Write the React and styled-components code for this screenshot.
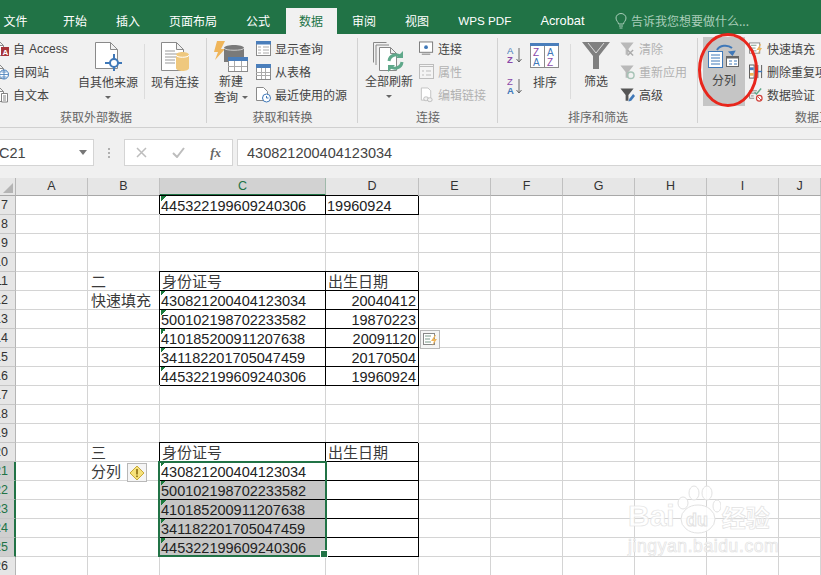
import React from 'react';
import styled, { createGlobalStyle, css } from 'styled-components';

const Global = createGlobalStyle`
  html, body { margin: 0; padding: 0; background: #fff; overflow: hidden; }
  #root { width: 821px; height: 575px; overflow: hidden; }
  * { box-sizing: border-box; }
`;
const CJK = `"Noto Sans CJK SC", "Liberation Sans", sans-serif`;
const NUM = `"Liberation Sans", "Noto Sans CJK SC", sans-serif`;

const Page = styled.div`
  position: relative; width: 821px; height: 575px; overflow: hidden;
  display: flex; flex-direction: column; font-family: ${CJK};
`;
const TabBar = styled.nav`
  flex: none; height: 34px; background: #217346; display: flex; align-items: flex-end;
  padding-left: 0; gap: 2px; margin-left: -10px; font-size: 12px; color: #fff;
`;
const Tab = styled.div`
  height: 26px; line-height: 25px; padding: 0 13.5px; white-space: nowrap;
  margin-right: ${p => p.$mr || 0}px;
  ${p => p.$fs && css`font-family: ${NUM}; font-size: ${p.$fs}px;`}
  ${p => p.$active && css`background: #f1f1f1; color: #217346;`}
`;
const TellMe = styled.div`
  height: 26px; margin-left: 15px; display: flex; align-items: center; gap: 4px;
  color: #a9cdb9; white-space: nowrap; padding-bottom: 1px;
`;
const Ribbon = styled.div`
  flex: none; height: 94px; background: #f1f1f1; border-bottom: 1px solid #d0d0d0;
  display: flex; overflow: hidden; color: #444; font-size: 12px;
`;
const RibbonTrack = styled.div`display: flex; margin-left: -15px; height: 93px; flex: none;`;
const Group = styled.section`
  position: relative; width: ${p => p.$w}px; flex: none; display: flex; flex-direction: column;
  padding-top: 3px;
  ${p => p.$sep && css`
    &::after { content: ''; position: absolute; right: 0; top: 4px; bottom: 4px; width: 1px; background: #d2d2d2; }
  `}
`;
const GroupBody = styled.div`
  display: flex; height: 69px; padding-left: ${p => p.$pl || 0}px;
`;
const GroupLabel = styled.div`
  height: 21px; line-height: 21px; text-align: center; color: #666; font-size: 12px; white-space: nowrap;
`;
const Big = styled.div`
  width: ${p => p.$w}px; margin-left: ${p => p.$ml || 0}px; flex: none; height: 69px;
  display: flex; flex-direction: column; align-items: center; padding-top: ${p => p.$pt ?? 5}px;
  line-height: 16px; text-align: center; white-space: nowrap; color: #444;
  ${p => p.$on && css`background: #c5c5c5;`}
`;
const BigIcon = styled.div`height: ${p => p.$h || 30}px; margin-bottom: ${p => p.$mb ?? 2}px; display: flex; align-items: flex-start; justify-content: center;`;
const Caret = styled.span`
  display: inline-block; width: 0; height: 0; border: 3px solid transparent; border-top: 3px solid #666; border-bottom: 0;
  margin: ${p => p.$inline ? '0 0 2px 4px' : '6px 0 0'};
  vertical-align: middle;
`;
const Small = styled.div`
  width: ${p => p.$w}px; margin-left: ${p => p.$ml || 0}px; flex: none; display: flex; flex-direction: column;
`;
const SortCol = styled.div`
  width: 15px; flex: none; display: flex; flex-direction: column; padding-top: 9px; gap: 13px;
`;
const SmallRow = styled.div`
  height: 23px; display: flex; align-items: center; gap: ${p => p.$gap ?? 4}px; white-space: nowrap;
  color: ${p => p.$off ? '#b1b1b1' : '#444'};
`;
const Latin = styled.span`font-family: ${NUM}; font-size: 12px; margin-left: 1px;`;
const IconBox = styled.span`
  width: ${p => p.$w || 15}px; height: 16px; flex: none; display: flex; align-items: center; justify-content: center;
`;
const Divider = styled.div`width: 1px; height: 55px; margin: 7px 0 0 ${p => p.$ml || 0}px; background: #dcdcdc; flex: none;`;

const FormulaBar = styled.div`
  flex: none; height: 50px; background: #f0f0f0; padding: 11px 0 12px; display: flex; align-items: stretch;
  font-family: ${NUM}; font-size: 14.5px; color: #444;
`;
const NameBox = styled.div`
  width: 94px; background: #fff; border: 1px solid #d4d4d4; border-left: 0; display: flex; align-items: center;
  justify-content: space-between; padding: 0 5px 0 0; margin-left: 0; overflow: hidden;
  span:first-child { margin-left: -1px; }
`;
const NameCaret = styled.span`width: 0; height: 0; border: 4px solid transparent; border-top: 5px solid #777; border-bottom: 0; margin-right: 1px;`;
const Grip = styled.div`width: 30px; display: flex; flex-direction: column; align-items: center; justify-content: center; gap: 2px; i { width: 2px; height: 2px; background: #b0b0b0; }`;
const FxBox = styled.div`
  width: 109px; background: #fff; border: 1px solid #d4d4d4; display: flex; align-items: center; justify-content: space-between; padding: 0 11px 0 11px;
`;
const Fx = styled.span`font-family: "Liberation Serif", serif; font-style: italic; font-weight: bold; font-size: 13px; color: #666;`;
const FormulaInput = styled.div`
  flex: 1; margin-left: 4px; background: #fff; border: 1px solid #d4d4d4; border-right: 0; display: flex; align-items: center; padding-left: 9px;
`;

const gridTemplate = css`
  display: grid;
  grid-template-columns: 16px 72px 72px 166px 93px 72px 72px 72px 72px 72px 42px;
  grid-template-rows: 18px repeat(20, 19px);
  grid-area: 1 / 1;
`;
const Sheet = styled.div`
  flex: 1; display: grid; overflow: hidden; background: #fff;
  font-family: ${NUM}; font-size: 14.5px; color: #222;
`;
const CellGrid = styled.div`${gridTemplate}`;
const OverlayGrid = styled.div`${gridTemplate} pointer-events: none; z-index: 2;`;
const Corner = styled.div`
  background: #e6e6e6; border-right: 1px solid #b5b5b5; border-bottom: 1px solid #a8a8a8; position: relative; overflow: hidden;
  &::after { content: ''; position: absolute; right: 2px; bottom: 2px; border: 5px solid #b4b4b4; border-top-color: transparent; border-left-color: transparent; }
`;
const ColHead = styled.div`
  background: ${p => p.$sel ? '#d2d2d2' : '#e6e6e6'}; color: ${p => p.$sel ? '#217346' : '#333'};
  border-right: 1px solid ${p => p.$sel ? '#9fb9aa' : '#c0c0c0'};
  border-bottom: ${p => p.$sel ? '2px solid #217346' : '1px solid #a8a8a8'};
  text-align: center; font-size: 12.5px; line-height: 17px;
`;
const RowHead = styled.div`
  background: ${p => p.$sel ? '#cfcfcf' : '#e6e6e6'}; color: ${p => p.$sel ? '#217346' : '#333'};
  border-bottom: 1px solid #c6c6c6;
  border-right: ${p => p.$sel ? '2px solid #217346' : '1px solid #b5b5b5'};
  font-size: 12.5px; line-height: 18px; overflow: hidden; display: flex; justify-content: flex-end; padding-right: ${p => p.$sel ? 6 : 7}px; white-space: nowrap;
`;
const Cell = styled.div`
  border-right: 1px solid ${p => p.$box ? '#000' : '#d4d4d4'};
  border-bottom: 1px solid ${p => p.$box ? '#000' : '#d4d4d4'};
  background-color: ${p => p.$gray ? '#c6c6c6' : '#fff'};
  white-space: nowrap; line-height: 19px; padding: 1px 2px 0 1px;
  text-align: ${p => p.$right ? 'right' : 'left'};
  min-width: 0; overflow: visible;
  ${p => p.$box && css`box-shadow: -1px -1px 0 0 #000;`}
  ${p => p.$tri && css`
    background-image: linear-gradient(135deg, #1a7a3c 50%, transparent 50%);
    background-repeat: no-repeat; background-size: 5px 5px; background-position: 1px 0;
  `}
  ${p => p.$cjk && css`font-family: ${CJK}; font-size: 15px; line-height: 18px; color: #3a3a3a; padding-top: 0; padding-left: ${p.$pl ?? 2}px;`}
`;
const Selection = styled.div`
  grid-column: 4; grid-row: 16 / span 5; margin: -1px -1px 0 -2px; border: 2px solid #217346;
  position: relative;
  &::after { content: ''; position: absolute; right: -3px; bottom: -3px; width: 6px; height: 6px; background: #217346; border: 1px solid #fff; }
`;
const SmartTag = styled.div`
  grid-column: ${p => p.$col}; grid-row: ${p => p.$row}; width: 20px; height: 19px;
  margin: ${p => p.$m}; background: #f5f5f5; border: 1px solid #b8b8b8; display: flex; align-items: center; justify-content: center;
`;
const Circle = styled.svg`position: absolute; left: 695px; top: 30px; width: 66px; height: 84px; pointer-events: none;`;
const Watermark = styled.div`
  position: absolute; left: 628px; top: 484px; width: 150px; height: 72px; pointer-events: none;
  display: flex; flex-direction: column; font-family: ${NUM}; color: rgba(255,255,255,.85);
  -webkit-text-stroke: .7px #e2e2e2;
`;
const MarkTop = styled.div`display: flex; align-items: flex-end; height: 50px; font-size: 30px; font-weight: bold; line-height: 34px;`;
const MarkCn = styled.span`font-family: ${CJK}; font-size: 24px; line-height: 32px; margin-left: 1px; font-weight: 700;`;
const MarkUrl = styled.div`font-size: 17.5px; line-height: 20px; letter-spacing: .6px; margin-top: 3px; white-space: nowrap;`;

/* icons */
const G = '#8a8a8a';
const Doc = ({ x = .5, y = .5, w = 10, h = 13, c = G }) => (
  <path d={`M${x} ${y}h${w - 4}l4 4v${h - 4}h-${w}z M${x + w - 4} ${y}v4h4`} fill="#fff" stroke={c} />
);
const S = ({ w = 15, h = 16, children }) => <svg width={w} height={h} viewBox={`0 0 ${w} ${h}`} fill="none">{children}</svg>;
const AccessI = () => <S w={13}><Doc x={-3.5} y={.5} w={10} h={14} /><rect x="4" y="6" width="8" height="9" fill="#a8353a" /><text x="5.4" y="14" fontSize="8" fontWeight="bold" fill="#fff" fontFamily="Liberation Sans">A</text></S>;
const WebI = () => <S w={13}><Doc x={-3.5} y={.5} w={10} h={14} /><circle cx="7" cy="10.5" r="4.5" fill="#fff" stroke="#3f78b8" /><path d="M2.5 10.5h9M7 6v9M4.5 8h5M4.5 13h5" stroke="#3f78b8" strokeWidth=".8" /></S>;
const TextI = () => <S w={13}><Doc x={-3.5} y={.5} w={10} h={14} /><path d="M4.5 6.500h6v8.500h-6zM6 9h3M6 11h3M6 13h3" stroke="#777" fill="#fff" strokeWidth=".9" /></S>;
const OtherI = () => <svg width="28" height="30" fill="none"><path d="M1.500.5h15l7 7v19h-22z M16.500.5v7h7" fill="#fff" stroke="#8a8a8a" /><circle cx="20" cy="21" r="4" stroke="#3f78b8" strokeWidth="2" fill="#fff" /><path d="M20 12v5M20 25v4M11 21h5M24 21h4" stroke="#3f78b8" strokeWidth="2" /></svg>;
const ExistI = () => <svg width="28" height="30" fill="none"><path d="M.5.5h15l7 7v21h-22zM15.500.5v7h7" fill="#fff" stroke="#8a8a8a" /><path d="M4 9h10M4 12h14M4 15h14M4 18h10M4 21h10" stroke="#999" /><path d="M15 13c0-4 13-4 13 0v13c0 4-13 4-13 0z" fill="#efc87e" /><path d="M15 13c0 3 13 3 13 0" stroke="#fff" /></svg>;
const GridT = ({ x, y, w, h, c = '#4a7ebb', cols = 3, rows = 3 }) => {
  const cx = []; for (let i = 1; i < cols; i++) cx.push(x + (w * i) / cols);
  const cy = []; for (let i = 1; i < rows; i++) cy.push(y + 4 + ((h - 4) * i) / rows);
  return <g><rect x={x + .5} y={y + .5} width={w} height={h} fill="#fff" stroke={G} /><rect x={x} y={y} width={w + 1} height="4" fill={c} />
    {cx.map(v => <path key={v} d={`M${Math.round(v) + .5} ${y + 4}v${h - 4}`} stroke="#aaa" />)}
    {cy.map(v => <path key={v} d={`M${x} ${Math.round(v) + .5}h${w}`} stroke="#aaa" />)}</g>;
};
const NewQ = () => <svg width="34" height="32" fill="none"><path d="M3 1h8l-4 8h4L1 20l3-8H0z" fill="#efb55a" /><path d="M10 8c0-4 20-4 20 0v14H10z" fill="#7a7a7a" /><path d="M10 8c0 3 20 3 20 0" stroke="#ccc" /><GridT x={14} y={17} w={19} h={14} rows={2} /></svg>;
const ShowQ = () => <S h={16}><rect x=".5" y=".5" width="14" height="14" fill="#fff" stroke={G} /><rect x="0" y="0" width="15" height="3.500" fill="#4a7ebb" /><path d="M2 6h3M2 9h3M2 12h3M7 6h6M7 9h6M7 12h6" stroke="#aaa" /></S>;
const FromT = () => <S><GridT x={0} y={0} w={14} h={15} /></S>;
const Recent = () => <S><path d="M.5.5h7l4 4v9h-11z" fill="#fff" stroke={G} /><circle cx="10.500" cy="11" r="4" fill="#fff" stroke="#3f78b8" /><path d="M10.500 9v2h2" stroke="#3f78b8" /></S>;
const RefreshAll = () => <svg width="32" height="30" fill="none"><path d="M.5.5h13M.5.5v20M3 3h13M3 3v20" stroke="#888" /><path d="M6.500 5.500h11l6 6v17h-17zM17.500 5.500v6h6" fill="#fff" stroke="#888" /><path d="M16 19a7 7 0 0 1 12-4M29 20a7 7 0 0 1-12 4" stroke="#5fa88a" strokeWidth="3" /><path d="M30 9v7h-7zM15 30v-7h7z" fill="#5fa88a" /></svg>;
const Conn = () => <S w={16}><rect x=".5" y=".5" width="14" height="11" fill="#fff" stroke="#777" /><path d="M3 13.500h9" stroke="#777" /><circle cx="7.500" cy="6" r="2" fill="#3f78b8" /></S>;
const Prop = () => <S><rect x=".5" y=".5" width="14" height="14" fill="#f4f4f4" stroke="#bdbdbd" /><path d="M0 2.500h15M3 7h2M7 7h5M3 11h2M7 11h5" stroke="#bdbdbd" /></S>;
const EditL = () => <S w={16}><path d="M2.500.5h7l3 3v10h-10z" fill="#fff" stroke="#c0c0c0" /><rect x="5" y="10" width="5" height="4" rx="2" stroke="#bbb" fill="#f1f1f1" /><rect x="9" y="11" width="5" height="4" rx="2" stroke="#bbb" fill="#f1f1f1" /></S>;
const SortI = ({ top, bot, tc, bc }) => <svg width="16" height="18" fill="none"><text x="0" y="8" fontSize="9.500" fill={tc} fontFamily="Liberation Sans">{top}</text><text x="0" y="17" fontSize="9.500" fontWeight="bold" fill={bc} fontFamily="Liberation Sans">{bot}</text><path d="M12 2v14M9.500 13l2.500 3 2.500-3" stroke="#666" /></svg>;
const SortBig = () => <svg width="30" height="26" fill="none"><rect x=".5" y=".5" width="28" height="24" fill="#fff" stroke={G} /><rect width="29" height="3" fill="#4a7ebb" /><path d="M14.500 3v22" stroke={G} /><text x="3" y="13" fontSize="10" fill="#8a49a8" fontFamily="Liberation Sans">Z</text><text x="3" y="23" fontSize="10" fill="#3f78b8" fontFamily="Liberation Sans">A</text><text x="17" y="13" fontSize="10" fill="#3f78b8" fontFamily="Liberation Sans">A</text><text x="17" y="23" fontSize="10" fill="#8a49a8" fontFamily="Liberation Sans">Z</text></svg>;
const Funnel = () => <svg width="28" height="28"><path d="M0 0h28L17 14v13h-6V14z" fill="#808080" /><path d="M6 1l8 10 8-10" stroke="#ddd" fill="none" /></svg>;
const SF = ({ c, children }) => <S w={16}><path d="M.5 1h14L9 8v6H6V8z" fill={c} />{children}</S>;
const ClearI = () => <SF c="#b9b9b9"><path d="M8 9l6 6M14 9l-6 6" stroke="#aaa" strokeWidth="1.500" /></SF>;
const ReapI = () => <SF c="#b9b9b9"><circle cx="11.500" cy="11.500" r="3.500" stroke="#a6c3b6" strokeWidth="1.500" fill="none" /></SF>;
const AdvI = () => <SF c="#555"><path d="M9 15l1-3 4-5 2 2-4 5z" fill="#3f78b8" /></SF>;
const SplitI = () => <svg width="32" height="26" fill="none"><path d="M9 8a9 7 0 0 1 15-2" stroke="#3f78b8" strokeWidth="2" /><path d="M20 9h8l-4 5z M21 2" fill="#3f78b8" transform="rotate(-8 24 10)" /><rect x=".5" y="9.500" width="14" height="16" fill="#fff" stroke="#3f78b8" /><path d="M3 13h9M3 16h9M3 19h9M3 22h9" stroke="#3f78b8" /><rect x="18.500" y="14.500" width="12" height="10" fill="#fff" stroke="#666" /><rect x="18" y="14" width="13" height="2.500" fill="#666" /><path d="M21 19h3M26 19h3M21 22h3M26 22h3" stroke="#3f78b8" /></svg>;
const FlashI = () => <S w={15}><rect x=".5" y="1.500" width="11" height="11" fill="#fff" stroke="#888" /><path d="M2 4h6M2 7h5M2 10h6" stroke="#7a9a8a" /><path d="M12 3l-4 6h3l-2 5 5-7h-3l2-4z" fill="#efb55a" /></S>;
const DupI = () => <S w={15}><rect x=".5" y=".5" width="5" height="14" fill="#fff" stroke="#555" /><rect x="1" y="3" width="4" height="3" fill="#4a7ebb" /><rect x="1" y="9" width="4" height="3" fill="#efb55a" /><path d="M9.500 .5v14M13.500 .5v14" stroke="#555" /><path d="M7 7.500h7" stroke="#3f78b8" strokeWidth="1.500" /></S>;
const ValidI = () => <S w={15}><path d="M.5 3.500h8M.5 3.500v8h5" stroke="#888" /><path d="M2 6h5M2 9h3" stroke="#888" /><path d="M6 5l2 2 5-6" stroke="#5fa88a" strokeWidth="1.500" /><circle cx="11" cy="11.500" r="3" fill="#fff" stroke="#d0413a" strokeWidth="1.300" /><path d="M9 9.500l4 4" stroke="#d0413a" /></S>;
const Bulb = () => <svg width="12" height="16" fill="none" stroke="#a9cdb9"><path d="M3.500 11c0-2-2.500-3-2.500-6a5 4.500 0 0 1 10 0c0 3-2.500 4-2.500 6z" /><path d="M4 13h4M4.500 15h3" /></svg>;
const ErrDiamond = () => <svg width="14" height="14"><path d="M7 0l7 7-7 7-7-7z" fill="#f6e27a" stroke="#c7a93b" /><rect x="6.200" y="3" width="1.600" height="5.500" fill="#8a6d10" /><rect x="6.200" y="9.500" width="1.600" height="1.600" fill="#8a6d10" /></svg>;

/* data */
const ID = ['430821200404123034', '500102198702233582', '410185200911207638', '341182201705047459', '445322199609240306'];
const DT = ['20040412', '19870223', '20091120', '20170504', '19960924'];
const data = {
  7: { C: { t: ID[4], box: 1, tri: 1 }, D: { t: DT[4], box: 1 } },
  11: { B: { t: '二', cjk: 1 }, C: { t: '身份证号', box: 1, cjk: 1 }, D: { t: '出生日期', box: 1, cjk: 1 } },
  20: { B: { t: '三', cjk: 1 }, C: { t: '身份证号', box: 1, cjk: 1 }, D: { t: '出生日期', box: 1, cjk: 1 } },
  21: { B: { t: '分列', cjk: 1 } },
  12: { B: { t: '快速填充', cjk: 1 } },
};
ID.forEach((t, i) => {
  data[12 + i] = { ...(data[12 + i] || {}), C: { t, box: 1, tri: 1 }, D: { t: DT[i], box: 1, right: 1 } };
  data[21 + i] = { ...(data[21 + i] || {}), C: { t, box: 1, tri: 1, gray: i > 0 }, D: { t: '', box: 1 } };
});
const COLS = ['A', 'B', 'C', 'D', 'E', 'F', 'G', 'H', 'I', 'J'];
const ROWS = Array.from({ length: 20 }, (_, i) => i + 7);

export default function App() {
  return (
    <Page>
      <Global />
      <TabBar>
        <Tab $mr={6.5}>文件</Tab><Tab>开始</Tab><Tab>插入</Tab><Tab>页面布局</Tab><Tab>公式</Tab>
        <Tab $active>数据</Tab><Tab>审阅</Tab><Tab>视图</Tab>
        <Tab $fs={11.7}>WPS PDF</Tab><Tab $fs={12.8}>Acrobat</Tab>
        <TellMe><Bulb />告诉我您想要做什么...</TellMe>
      </TabBar>
      <Ribbon>
        <RibbonTrack>
          <Group $w={222} $sep>
            <GroupBody $pl={12}>
              <Small $w={81}>
                <SmallRow $gap={3}><IconBox $w={13}><AccessI /></IconBox>自<Latin>Access</Latin></SmallRow>
                <SmallRow $gap={3}><IconBox $w={13}><WebI /></IconBox>自网站</SmallRow>
                <SmallRow $gap={3}><IconBox $w={13}><TextI /></IconBox>自文本</SmallRow>
              </Small>
              <Big $w={60}><BigIcon><OtherI /></BigIcon>自其他来源<Caret /></Big>
              <Divider $ml={6} />
              <Big $w={48} $ml={6}><BigIcon><ExistI /></BigIcon>现有连接</Big>
            </GroupBody>
            <GroupLabel>获取外部数据</GroupLabel>
          </Group>
          <Group $w={151} $sep>
            <GroupBody $pl={6}>
              <Big $w={36} $pt={3}><BigIcon $h={32} $mb={1}><NewQ /></BigIcon>新建<span>查询<Caret $inline /></span></Big>
              <Small $w={100} $ml={7}>
                <SmallRow><IconBox><ShowQ /></IconBox>显示查询</SmallRow>
                <SmallRow><IconBox><FromT /></IconBox>从表格</SmallRow>
                <SmallRow><IconBox><Recent /></IconBox>最近使用的源</SmallRow>
              </Small>
            </GroupBody>
            <GroupLabel>获取和转换</GroupLabel>
          </Group>
          <Group $w={140} $sep>
            <GroupBody $pl={7}>
              <Big $w={48}><BigIcon $mb={1}><RefreshAll /></BigIcon>全部刷新<Caret /></Big>
              <Small $w={70} $ml={6}>
                <SmallRow><IconBox><Conn /></IconBox>连接</SmallRow>
                <SmallRow $off><IconBox><Prop /></IconBox>属性</SmallRow>
                <SmallRow $off><IconBox><EditL /></IconBox>编辑链接</SmallRow>
              </Small>
            </GroupBody>
            <GroupLabel>连接</GroupLabel>
          </Group>
          <Group $w={200} $sep>
            <GroupBody $pl={9}>
              <SortCol>
                <SortI top="A" bot="Z" tc="#3f78b8" bc="#8a49a8" />
                <SortI top="Z" bot="A" tc="#8a49a8" bc="#3f78b8" />
              </SortCol>
              <Big $w={32} $ml={7} $pt={6}><BigIcon $h={26} $mb={5}><SortBig /></BigIcon>排序</Big>
              <Divider $ml={9} />
              <Big $w={32} $ml={9}><BigIcon $h={28} $mb={3}><Funnel /></BigIcon>筛选</Big>
              <Small $w={76} $ml={8}>
                <SmallRow $off><IconBox><ClearI /></IconBox>清除</SmallRow>
                <SmallRow $off><IconBox><ReapI /></IconBox>重新应用</SmallRow>
                <SmallRow><IconBox><AdvI /></IconBox>高级</SmallRow>
              </Small>
            </GroupBody>
            <GroupLabel>排序和筛选</GroupLabel>
          </Group>
          <Group $w={242}>
            <GroupBody $pl={5}>
              <Big $w={42} $on $pt={5}><BigIcon $h={26} $mb={4}><SplitI /></BigIcon>分列</Big>
              <Small $w={120} $ml={4}>
                <SmallRow><IconBox $w={14}><FlashI /></IconBox>快速填充</SmallRow>
                <SmallRow><IconBox $w={14}><DupI /></IconBox>删除重复项</SmallRow>
                <SmallRow><IconBox $w={14}><ValidI /></IconBox>数据验证</SmallRow>
              </Small>
            </GroupBody>
            <GroupLabel>数据工具</GroupLabel>
          </Group>
        </RibbonTrack>
      </Ribbon>
      <FormulaBar>
        <NameBox><span>C21</span><NameCaret /></NameBox>
        <Grip><i /><i /><i /></Grip>
        <FxBox>
          <svg width="11" height="11" stroke="#bdbdbd" strokeWidth="1.500"><path d="M1 1l9 9M10 1l-9 9" /></svg>
          <svg width="13" height="11" fill="none" stroke="#bdbdbd" strokeWidth="2"><path d="M1 6l4 4 7-9" /></svg>
          <Fx>fx</Fx>
        </FxBox>
        <FormulaInput>430821200404123034</FormulaInput>
      </FormulaBar>
      <Sheet>
        <CellGrid>
          <Corner />
          {COLS.map(c => <ColHead key={c} $sel={c === 'C'}>{c}</ColHead>)}
          {ROWS.map(r => (
            <React.Fragment key={r}>
              <RowHead $sel={r >= 21 && r <= 25}>{r}</RowHead>
              {COLS.map(c => {
                const d = (data[r] || {})[c] || {};
                return <Cell key={c} $box={d.box} $tri={d.tri} $gray={d.gray} $right={d.right} $cjk={d.cjk} $pl={c === 'B' ? 3 : 2}>{d.t}</Cell>;
              })}
            </React.Fragment>
          ))}
        </CellGrid>
        <OverlayGrid>
          <Selection />
          <SmartTag $col={6} $row={9} $m="1px 0 0 1px"><FlashI /></SmartTag>
          <SmartTag $col={3} $row={16} $m="1px 0 0 39px"><ErrDiamond /></SmartTag>
        </OverlayGrid>
      </Sheet>
      <Circle viewBox="0 0 66 84" fill="none"><ellipse cx="33" cy="40" rx="28.500" ry="35.500" stroke="#e8261c" strokeWidth="3" /></Circle>
      <Watermark>
        <MarkTop>
          <span>Bai</span>
          <svg width="44" height="50" viewBox="0 0 44 50" fill="rgba(255,255,255,.85)" stroke="#e2e2e2" strokeWidth="1" style={{ flex: 'none', margin: '0 0 -1px 2px' }}>
            <ellipse cx="17" cy="9" rx="5" ry="7" /><ellipse cx="30" cy="9" rx="5" ry="7" /><ellipse cx="6" cy="19" rx="5" ry="6" /><ellipse cx="40" cy="22" rx="4" ry="6" />
            <ellipse cx="21" cy="35" rx="17" ry="14" />
            <text x="9" y="42" fontSize="18" fontWeight="bold" fontFamily="Liberation Sans">du</text>
          </svg>
          <MarkCn>经验</MarkCn>
        </MarkTop>
        <MarkUrl>jingyan.baidu.com</MarkUrl>
      </Watermark>
    </Page>
  );
}
